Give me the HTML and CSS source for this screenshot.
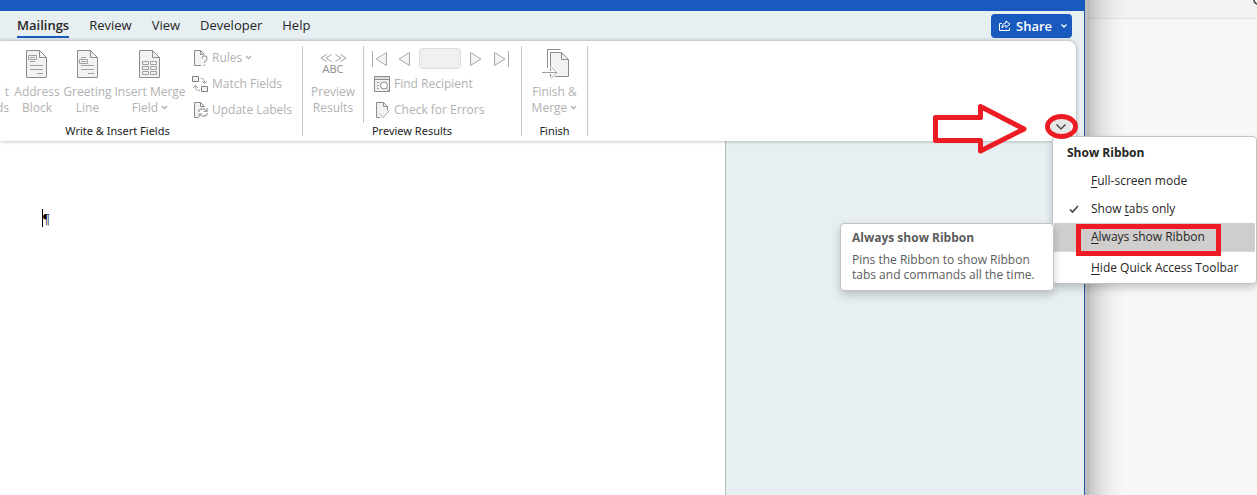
FILE: index.html
```
<!DOCTYPE html>
<html lang="en">
<head>
<meta charset="utf-8">
<title>Mailings ribbon</title>
<link rel="stylesheet" href="styles.css">
</head>
<body>
<div class="screen">
  <main class="window">
    <div class="titlebar"></div>
    <header class="tabs">
      <nav class="tab-list">
        <button class="tab active">Mailings</button>
        <button class="tab">Review</button>
        <button class="tab">View</button>
        <button class="tab">Developer</button>
        <button class="tab">Help</button>
      </nav>
      <button class="share">
        <svg width="14" height="14" viewBox="0 0 14 14" fill="none" stroke="currentColor"><path d="M4 4.500H1.500v7h10V9M8 2l4 3-4 3.500V6.500C6 6.500 5 7.500 4 9 4 6 5.500 4 8 4z"/></svg>
        <span>Share</span>
        <svg class="share-chev" width="8" height="6" viewBox="0 0 8 6" fill="none" stroke="currentColor" stroke-width="1.300"><path d="M1.500 1.500L4 4l2.500-2.500"/></svg>
      </button>
    </header>
    <section class="ribbon">
      <div class="group group-write">
        <div class="group-body">
          <button class="big cut"><span>t<br>ds</span></button>
          <button class="big address">
            <svg width="24" height="30" viewBox="0 0 24 30" fill="none" stroke="#8c8c8c"><path fill="#f2f2f2" d="M1.500 1.500h13l7 7v20h-20z"/><path d="M14.500 1.500v7h7"/><path stroke="#a0a0a0" d="M3.500 6.500h8v4h-8zM5 8.500h5M5 12.500h5M5 16.500h13M5 20.500h13M12 24.500h6"/></svg>
            <span>Address<br>Block</span>
          </button>
          <button class="big greeting">
            <svg width="24" height="30" viewBox="0 0 24 30" fill="none" stroke="#8c8c8c"><path fill="#f2f2f2" d="M1.500 1.500h13l7 7v20h-20z"/><path d="M14.500 1.500v7h7"/><path stroke="#a0a0a0" d="M3.500 10.500h8v4h-8zM5 12.500h5M5 8.500h5M5 16.500h13M5 20.500h13M12 24.500h6"/></svg>
            <span>Greeting<br>Line</span>
          </button>
          <button class="big insert">
            <svg width="24" height="30" viewBox="0 0 24 30" fill="none" stroke="#8c8c8c"><path fill="#f2f2f2" d="M1.500 1.500h13l7 7v20h-20z"/><path d="M14.500 1.500v7h7"/><path stroke="#a0a0a0" d="M4.500 12.500h6v3h-6zM12.500 12.500h6v3h-6zM4.500 17.500h6v3h-6zM12.500 17.500h6v3h-6zM4.500 22.500h6v3h-6zM12.500 22.500h6v3h-6z"/></svg>
            <span>Insert Merge<br>Field <svg class="chev" width="7" height="5" viewBox="0 0 7 5" fill="none" stroke="currentColor" stroke-width="1.400"><path d="M1 1l2.500 2.500L6 1"/></svg></span>
          </button>
          <div class="small-list">
            <button class="small">
              <svg width="16" height="18" viewBox="0 0 16 18" fill="none" stroke="#8c8c8c"><path fill="#f2f2f2" stroke="none" d="M2 1h7l4 5v11H2z"/><path d="M9 16.500H2.500v-15h6l4 4M8.500 1.500v4H12"/><path stroke="#fff" stroke-width="3" d="M10 9.500c0-3.500 5-3.500 5 0 0 2-2.500 2-2.500 4.500"/><path stroke="#a0a0a0" stroke-width="1.200" d="M10 9.500c0-3.500 5-3.500 5 0 0 2-2.500 2-2.500 4.500M12.500 15.500v1.500"/></svg>
              <span>Rules <svg class="chev" width="7" height="5" viewBox="0 0 7 5" fill="none" stroke="currentColor" stroke-width="1.400"><path d="M1 1l2.500 2.500L6 1"/></svg></span>
            </button>
            <button class="small">
              <svg width="16" height="18" viewBox="0 0 16 18" fill="none" stroke="#808080"><path fill="#f2f2f2" d="M.5 1.500h6v5h-6zM9.500 11.500h6v5h-6z"/><path stroke="#a0a0a0" d="M8.500 3.500c3 0 4 1 4 5M10 6l2.500 2.500L15 6M8 15.500c-4 0-4.500-1-4.500-5M1 13l2.500-2.500L6 13"/></svg>
              <span>Match Fields</span>
            </button>
            <button class="small">
              <svg width="16" height="18" viewBox="0 0 16 18" fill="none" stroke="#8c8c8c"><path fill="#f2f2f2" stroke="none" d="M2 1h7l4 5v11H2z"/><path d="M6 16.500H2.500v-15h6l4 4M8.500 1.500v4h4"/><circle cx="11" cy="12" r="5" fill="#fff" stroke="none"/><path stroke="#a0a0a0" stroke-width="1.200" d="M6.500 11c1-4 6-4 8-1M15 7v3.500h-3.500M15.500 12c-1 4-6 4-8 1M7 16.500V13h3.500"/></svg>
              <span>Update Labels</span>
            </button>
          </div>
        </div>
        <h2 class="group-name">Write &amp; Insert Fields</h2>
      </div>
      <div class="group group-preview">
        <div class="group-body">
          <button class="big preview">
            <svg width="28" height="30" viewBox="0 0 28 30" fill="none" stroke="#a0a0a0"><path d="M7.500 5.500L2 9l5.500 3.500M12.500 5.500L7 9l5.500 3.500M16.500 5.500L22 9l-5.500 3.500M21.500 5.500L27 9l-5.500 3.500"/><text class="abc" x="14" y="24" text-anchor="middle">ABC</text></svg>
            <span>Preview<br>Results</span>
          </button>
          <div class="find">
            <div class="records">
              <button class="nav" aria-label="First record"><svg width="16" height="16" viewBox="0 0 16 16" fill="#f2f2f2" stroke="#aaa"><path d="M1.500 0v16M15.500 1.500v13L5 8z"/></svg></button>
              <button class="nav" aria-label="Previous record"><svg width="16" height="16" viewBox="0 0 16 16" fill="#f2f2f2" stroke="#aaa"><path d="M14.500 1.500v13L4 8z"/></svg></button>
              <input class="record" aria-label="Record" disabled>
              <button class="nav" aria-label="Next record"><svg width="16" height="16" viewBox="0 0 16 16" fill="#f2f2f2" stroke="#aaa"><path d="M1.500 1.500v13L12 8z"/></svg></button>
              <button class="nav" aria-label="Last record"><svg width="16" height="16" viewBox="0 0 16 16" fill="#f2f2f2" stroke="#aaa"><path d="M15.500 0v16M1.500 1.500v13L12 8z"/></svg></button>
            </div>
            <button class="small">
              <svg width="17" height="18" viewBox="0 0 17 18" fill="none" stroke="#8c8c8c"><path fill="#f2f2f2" d="M1.500 1.500h15v15h-15z"/><path fill="#ddd" d="M1.500 1.500h15v3h-15z"/><path stroke="#a0a0a0" d="M4 7.500h2M4 10.500h2M4 13.500h2M13 13l4 4"/><circle cx="11" cy="10.500" r="3.500" fill="#fff"/></svg>
              <span>Find Recipient</span>
            </button>
            <button class="small">
              <svg width="17" height="18" viewBox="0 0 17 18" fill="none" stroke="#8c8c8c"><path fill="#f2f2f2" stroke="none" d="M3 1h7l4 5v11H3z"/><path d="M7 16.500H3.500v-15h7l4 4v4M10.500 1.500v4h4"/><path stroke="#fff" stroke-width="3" d="M6.500 12.500l3.500 4 6.500-7"/><path stroke="#a0a0a0" d="M6.500 12.500l3.500 4 6.500-7"/></svg>
              <span>Check for Errors</span>
            </button>
          </div>
        </div>
        <h2 class="group-name">Preview Results</h2>
      </div>
      <div class="group group-finish">
        <div class="group-body">
          <button class="big finish">
            <svg width="28" height="30" viewBox="0 0 28 30" fill="none" stroke="#8c8c8c"><path d="M6.500 19V.5h13"/><path fill="#f2f2f2" d="M9.500 3.500h11l7 7v17h-18z"/><path d="M20.500 3.500v7h7"/><path stroke="#fff" stroke-width="3" d="M1 23.500h15M10 17.500l6 6-6 6"/><path stroke="#a0a0a0" d="M1 23.500h15M10 17.500l6 6-6 6"/></svg>
            <span>Finish &amp;<br>Merge <svg class="chev" width="7" height="5" viewBox="0 0 7 5" fill="none" stroke="currentColor" stroke-width="1.400"><path d="M1 1l2.500 2.500L6 1"/></svg></span>
          </button>
        </div>
        <h2 class="group-name">Finish</h2>
      </div>
      <button class="collapse" aria-label="Ribbon display options"><svg width="12" height="8" viewBox="0 0 12 8" fill="none" stroke="#333" stroke-width="1.200"><path d="M1.500 1.500L6 6l4.500-4.500"/></svg></button>
    </section>
    <section class="document">
      <div class="page"><span class="caret"></span><span class="pilcrow">¶</span></div>
    </section>
  </main>
  <aside class="behind">
    <div class="behind-bar"><svg width="4" height="5" viewBox="0 0 4 5" fill="none" stroke="#444" stroke-width="1.500"><path d="M1 0c0 2.500 1 3.500 3 4"/></svg></div>
  </aside>

  <div class="menu" role="menu">
    <h3 class="menu-title">Show Ribbon</h3>
    <button class="item" role="menuitem"><span><u>F</u>ull-screen mode</span></button>
    <button class="item" role="menuitem"><svg class="tick" width="10" height="9" viewBox="0 0 10 9" fill="none" stroke="#444" stroke-width="1.600"><path d="M1 4.500L3.500 7 9 1"/></svg><span>Show <u>t</u>abs only</span></button>
    <button class="item selected" role="menuitem"><span><u>A</u>lways show Ribbon</span></button>
    <button class="item last" role="menuitem"><span><u>H</u>ide Quick Access Toolbar</span></button>
  </div>
  <div class="tooltip" role="tooltip">
    <h3 class="tooltip-title">Always show Ribbon</h3>
    <p class="tooltip-text">Pins the Ribbon to show Ribbon<br>tabs and commands all the time.</p>
  </div>
  <svg class="arrow" width="98" height="56" viewBox="0 0 98 56" fill="none" stroke="#ed1c24" stroke-width="5"><path d="M5.500 18.500h45V7.500L94 30 50.500 52V41.500h-45z" stroke-linejoin="round"/></svg>
  <div class="ring"></div>
  <div class="frame"></div>
</div>
</body>
</html>
```
FILE: styles.css
```
* { box-sizing: border-box; }
body {
  margin: 0;
  font: 12px/16px "Open Sans", "Noto Sans", sans-serif;
  color: #262626;
}
button {
  margin: 0;
  padding: 0;
  border: 0;
  background: none;
  font: inherit;
  color: inherit;
}
h2, h3, p { margin: 0; }
svg { flex: none; }
.screen {
  position: relative;
  display: flex;
  min-height: 100vh;
  overflow: hidden;
}
.window {
  flex: 1;
  display: flex;
  flex-direction: column;
  border-right: 1px solid #2456a5;
  background: #e7eff2;
}
.titlebar { height: 11px; background: #185abd; margin-right: -1px; }
.tabs {
  display: flex;
  justify-content: space-between;
  height: 30px;
  padding: 3px 12px 3px 17px;
}
.tab-list { display: flex; gap: 20px; font-size: 13px; }
.tab { padding: 3px 0; border-bottom: 2px solid transparent; }
.tab.active { font-weight: 600; border-color: #185abd; }
.share {
  display: flex;
  align-items: center;
  gap: 4px;
  width: 81px;
  padding: 0 4px 0 7px;
  border-radius: 4px;
  background: #185abd;
  color: #fff;
  font-size: 13px;
  font-weight: 600;
}
.share-chev { margin-left: auto; }
.ribbon {
  position: relative;
  z-index: 1;
  display: flex;
  height: 100px;
  margin-right: 8px;
  padding: 5px 0;
  border-radius: 0 8px 0 0;
  background: #fff;
  box-shadow: 0 0 4px #0005;
}
.group {
  display: flex;
  flex-direction: column;
  border-right: 1px solid #c8c8c8;
}
.group-write { width: 303px; }
.group-preview { width: 219px; }
.group-finish { width: 66px; }
.group-body { display: flex; flex: none; height: 77px; color: #b1b1b1; }
.group-name {
  font-family: "Noto Sans", "Open Sans", sans-serif;
  font-size: 11px;
  font-weight: 400;
  line-height: 16px;
  text-align: center;
  color: #222;
}
.group-write .group-name { padding-right: 67px; }
.big {
  display: flex;
  flex-direction: column;
  align-items: center;
  gap: 5px;
  padding-top: 3px;
  white-space: nowrap;
}
.cut { width: 12px; align-items: flex-end; padding: 38px 3px 0 0; text-align: right; }
.cut span { margin-left: -3px; }
.address { width: 50px; }
.greeting { width: 51px; }
.insert { width: 74px; }
.preview { width: 61px; border-right: 1px solid #c8c8c8; }
.finish { width: 65px; }
.chev { vertical-align: 2px; }
.small-list { display: flex; flex-direction: column; padding-left: 5px; }
.small { display: flex; align-items: center; gap: 4px; height: 26px; white-space: nowrap; }
.small-list .small:first-child { margin-top: -1px; }
.abc { font: 11px "Open Sans", sans-serif; fill: #8c8c8c; stroke: none; }
.find { padding-left: 9px; }
.records { display: flex; align-items: center; gap: 8px; height: 25px; margin-left: -2px; }
.nav { display: flex; }
.record { width: 42px; height: 21px; padding: 0; border: 1px solid #ddd; border-radius: 4px; background: #f0f0f0; }
.collapse {
  display: flex;
  align-items: center;
  justify-content: center;
  align-self: flex-end;
  width: 20px;
  height: 18px;
  margin: 0 5px 0 auto;
  background: #e6e6e6;
}
.document { flex: 1; display: flex; }
.page {
  display: flex;
  align-items: flex-start;
  width: 67%;
  padding: 68px 42px;
  border-right: 1px solid #b5b9bb;
  background: #fff;
}
.caret { width: 1px; height: 18px; background: #000; }
.pilcrow { font: 14px/22px "Liberation Serif", serif; color: #000; }
.behind {
  width: 172px;
  border-left: 3px solid #bdbdbd;
  background: linear-gradient(90deg, #b9b9b9, #cacaca 3px, #dedede 12px, #ededed 22px, #f5f5f5 32px, #f8f8f8 42px);
}
.behind-bar {
  display: flex;
  justify-content: flex-end;
  height: 19px;
  border-bottom: 1px solid #0001;
  background: #00000006;
}
.menu {
  position: absolute;
  z-index: 2;
  top: 136px;
  right: 0;
  width: 205px;
  padding: 2px 1px 0;
  border: 1px solid #c2c2c2;
  border-radius: 4px;
  background: #fff;
  box-shadow: 0 4px 8px #0003;
}
.menu-title { padding-left: 13px; font-size: 12px; font-weight: 700; line-height: 28px; }
.item { position: relative; display: flex; align-items: center; width: 100%; height: 28px; padding-left: 37px; white-space: nowrap; }
.item u { text-underline-offset: 2px; }
.selected { background: #d0cecd; }
.last { height: 32px; border-top: 1px solid #d8d8d8; }
.tick { position: absolute; left: 15px; }
.tooltip {
  position: absolute;
  z-index: 2;
  top: 223px;
  right: 203px;
  width: 214px;
  padding: 6px 11px 8px;
  border: 1px solid #c2c2c2;
  border-radius: 4px;
  background: #fff;
  color: #5c5c5c;
  box-shadow: 0 4px 8px #0003;
}
.tooltip-title { margin-bottom: 6px; font-size: 12px; font-weight: 700; line-height: 16px; }
.tooltip-text { line-height: 15px; }
.arrow { position: absolute; z-index: 3; top: 99px; right: 229px; }
.ring { position: absolute; z-index: 3; top: 114px; right: 179px; width: 33px; height: 25px; border: 5px solid #ed1c24; border-radius: 50%; }
.frame { position: absolute; z-index: 3; top: 224px; right: 36px; width: 145px; height: 32px; border: 5px solid #ed1c24; }
```
